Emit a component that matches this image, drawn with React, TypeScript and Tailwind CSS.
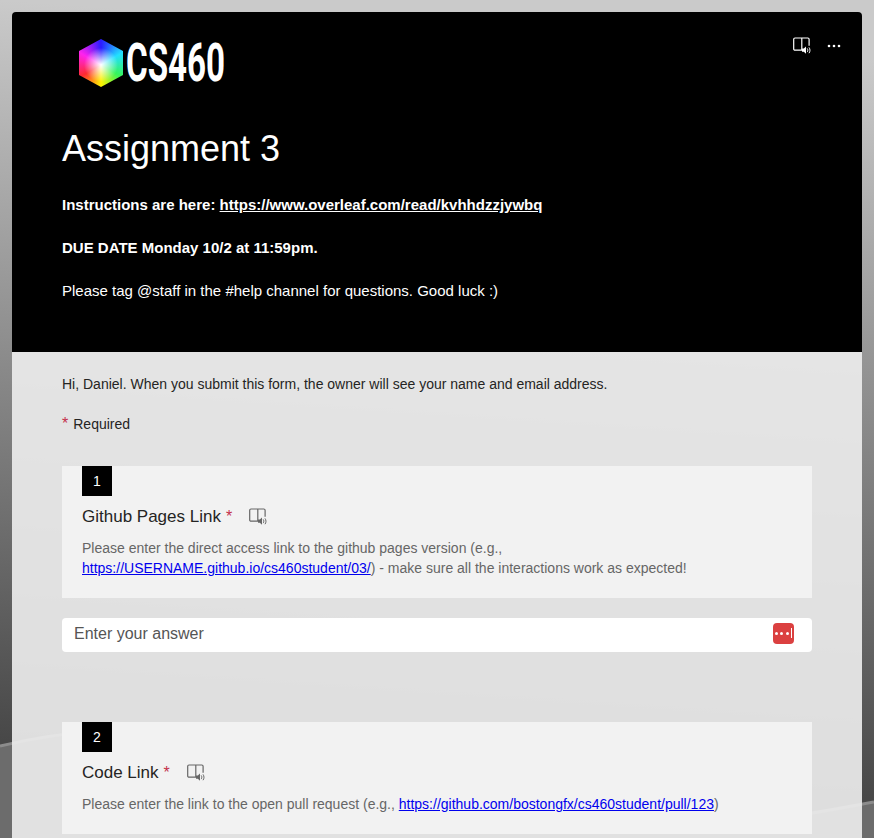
function ReaderIcon({ className }: { className?: string }) {
  // book with a small speaker in the corner
  return (
    <svg viewBox="0 0 18 17" fill="none" className={className}>
      <path
        d="M8.8 1H2a1.3 1.3 0 0 0-1.3 1.3v9.6A1.3 1.3 0 0 0 2 13.2h6.8V1zM8.8 1h6a1.3 1.3 0 0 1 1.3 1.3v6.4"
        stroke="currentColor"
        strokeWidth="1.2"
      />
      <path d="M9 11.6h1.8l2.2-2v7.2l-2.2-2H9z" fill="currentColor" />
      <path d="M14.2 11.4c.8 1 .8 2.7 0 3.7M16 10.4c1.3 1.7 1.3 4.1 0 5.8" stroke="currentColor" strokeWidth="1" />
    </svg>
  );
}

function Backdrop() {
  return (
    <svg viewBox="0 0 874 838" className="absolute inset-0 h-[838px] w-[874px]">
      <defs>
        <linearGradient id="backdrop" gradientUnits="userSpaceOnUse" x1="0" y1="0" x2="-50" y2="736">
          <stop offset="0" stopColor="#cacaca" />
          <stop offset="1" stopColor="#484848" />
        </linearGradient>
      </defs>
      <rect width="874" height="838" fill="url(#backdrop)" />
      <path
        d="M0 746C60 732 130 722 250 735C450 770 620 835 760 820C810 815 840 808 874 802V838H0Z"
        fill="#6c6c6c"
      />
      <path
        d="M0 746C60 732 130 722 250 735C450 770 620 835 760 820C810 815 840 808 874 802"
        fill="none"
        stroke="#8c8c8c"
        strokeWidth="3"
      />
    </svg>
  );
}

function Question({ num, title, children }: { num: number; title: string; children: React.ReactNode }) {
  return (
    <div className="bg-[#f2f2f2] px-5 pb-5">
      <div className="flex h-[30px] w-[30px] items-center justify-center bg-black text-sm text-white">{num}</div>
      <div className="mt-[10px] flex h-[21px] items-center text-[17px] text-[#252423]">
        <span>{title}</span>
        <span className="ml-[5px] text-base text-[#c4314b]">*</span>
        <ReaderIcon className="ml-[17px] h-[17px] w-[18px] text-[#666]" />
      </div>
      <p className="mt-[11px] text-sm leading-5 text-[#666]">{children}</p>
    </div>
  );
}

export default function App() {
  return (
    <div className="relative h-[838px] w-[874px] overflow-hidden font-['Liberation_Sans',Arial,sans-serif]">
      <Backdrop />
      <div className="relative mx-3 mt-3 overflow-hidden rounded-t-[4px]">
        <header className="relative h-[340px] bg-black pl-[50px] text-white">
          <div className="flex h-[102px] items-start pl-[17px] pt-[27px]">
            <div className="h-[48px] w-[44px] bg-[radial-gradient(circle_at_50%_54%,#ffffff_0%,#ffffff00_50%),conic-gradient(from_0deg_at_50%_54%,#2a1cff,#22e0ff_60deg,#35f55a_120deg,#fff200_180deg,#ff2a30_240deg,#ff22ee_300deg,#2a1cff)] [clip-path:polygon(50%_0,100%_25%,100%_75%,50%_100%,0_75%,0_25%)]" />
            <span className="ml-[3px] mt-[-6px] inline-block origin-left scale-x-[0.625] font-['Roboto',sans-serif] text-[53px] leading-[60px] font-bold">
              CS460
            </span>
          </div>
          <div className="absolute right-[21px] top-[25px] flex items-center gap-[16px]">
            <ReaderIcon className="h-[17px] w-[18px] text-white" />
            <svg viewBox="0 0 14 4" className="h-1 w-[14px] fill-white">
              <circle cx="2" cy="2" r="1.3" />
              <circle cx="7" cy="2" r="1.3" />
              <circle cx="12" cy="2" r="1.3" />
            </svg>
          </div>
          <h1 className="mt-[14px] text-4xl leading-[42px]">Assignment 3</h1>
          <div className="mt-[24px] text-[15px] leading-[21.5px]">
            <p className="font-bold">
              Instructions are here:{" "}
              <a href="#" className="underline">
                https://www.overleaf.com/read/kvhhdzzjywbq
              </a>
            </p>
            <p className="mt-[21.5px] font-bold">DUE DATE Monday 10/2 at 11:59pm.</p>
            <p className="mt-[21.5px]">Please tag @staff in the #help channel for questions. Good luck :)</p>
          </div>
        </header>

        <main className="h-[600px] bg-[#ececec]/[0.92] px-[50px] pt-[22px]">
          <p className="text-sm leading-5 text-[#252423]">
            Hi, Daniel. When you submit this form, the owner will see your name and email address.
          </p>
          <p className="mt-[18px] flex items-center text-sm leading-5 text-[#252423]">
            <span className="mr-[5px] text-base text-[#c4314b]">*</span>Required
          </p>

          <div className="mt-[30px]">
            <Question num={1} title="Github Pages Link">
              Please enter the direct access link to the github pages version (e.g.,
              <br />
              <a href="#" className="text-[#0000ee] underline">
                https://USERNAME.github.io/cs460student/03/
              </a>
              ) - make sure all the interactions work as expected!
            </Question>
            <div className="mt-5 flex h-[34px] items-center justify-between rounded-[4px] bg-white pb-1 pl-3 pr-[18px]">
              <span className="mt-[2px] text-base text-[#555]">Enter your answer</span>
              <div className="flex h-[21px] w-[21px] items-center justify-center gap-[2.5px] rounded-[4px] bg-[#db4040]">
                <span className="h-[3px] w-[3px] rounded-full bg-white" />
                <span className="h-[3px] w-[3px] rounded-full bg-white" />
                <span className="h-[3px] w-[3px] rounded-full bg-white" />
                <span className="h-[10px] w-px bg-white" />
              </div>
            </div>
          </div>

          <div className="mt-[70px]">
            <Question num={2} title="Code Link">
              Please enter the link to the open pull request (e.g.,{" "}
              <a href="#" className="text-[#0000ee] underline">
                https://github.com/bostongfx/cs460student/pull/123
              </a>
              )
            </Question>
          </div>
        </main>
      </div>
    </div>
  );
}
